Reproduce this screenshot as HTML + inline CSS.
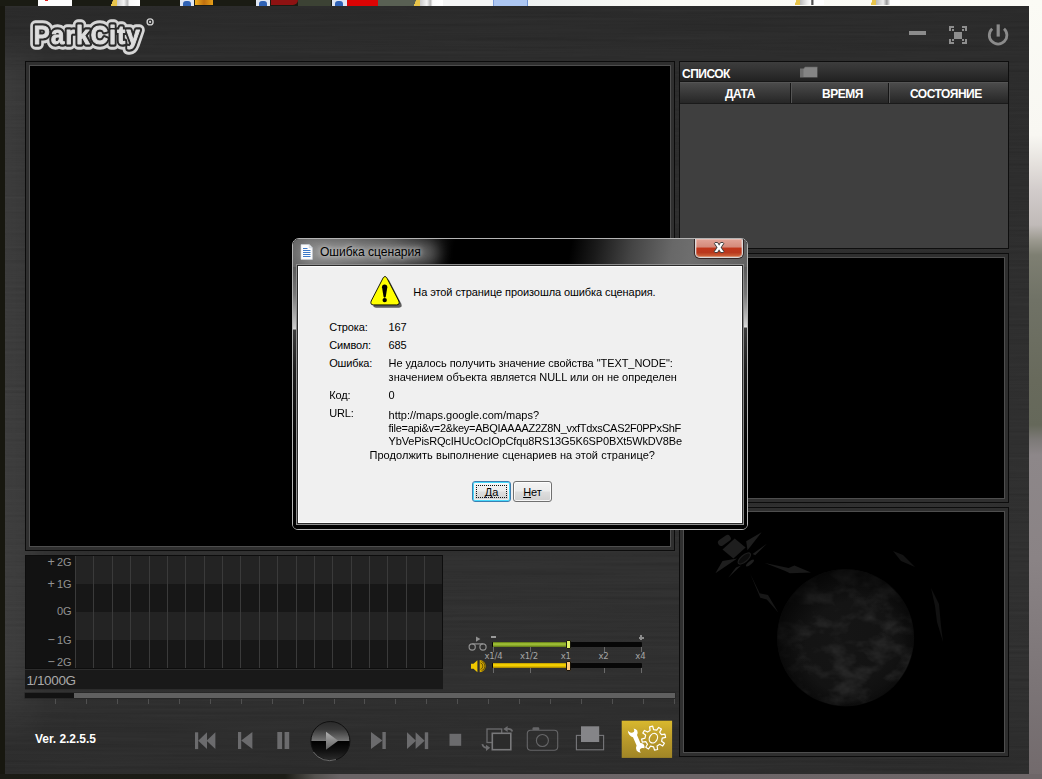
<!DOCTYPE html>
<html lang="ru">
<head>
<meta charset="utf-8">
<title>ParkCity</title>
<style>
*{box-sizing:border-box;margin:0;padding:0}
html,body{width:1042px;height:779px;overflow:hidden;background:#16160f;font-family:"Liberation Sans",sans-serif}
#desk{position:absolute;left:0;top:0;width:1042px;height:779px;overflow:hidden;background:#17170f}
.a{position:absolute}
/* desktop bits */
#dright{left:1029px;top:0;width:13px;height:779px;background:linear-gradient(#fbfbf5 0,#f8f7f2 135px,#e4e0dc 165px,#d2cccb 190px,#c0bab8 225px,#9c9a90 240px,#7e7f72 255px,#707266 300px,#686a5c 380px,#65685a 425px,#7d7a78 440px,#8d8789 455px,#8a8385 560px,#7c7577 680px,#726a6c 779px)}
#dbot{left:0;top:774px;width:1042px;height:5px;background:linear-gradient(90deg,#1b1b15 0,#1d1d17 285px,#55524f 315px,#6a6466 340px,#6e6668 100%)}
/* window */
#win{left:5px;top:6px;width:1024px;height:768px;background:
 linear-gradient(#282828 0,#2a2a2a 50px,#2c2c2c 300px,#2e2e2e 560px,#2d2d2d 680px,#2b2b2b 730px,#2a2a2a 768px)}
.frame{position:absolute;border:1px solid #0c0c0c;background:#2f2f2f}
.frame>i{position:absolute;left:3px;top:3px;right:3px;bottom:3px;border:1px solid #4e4e4e;background:#000;display:block}
.lt{color:#fff;font-weight:bold;font-size:12px;line-height:14px;white-space:nowrap;letter-spacing:-.5px}
.gl{left:20px;width:51.5px;text-align:right;font-size:11px;line-height:12px;color:#939393;letter-spacing:-.1px}
.tk{width:1px;height:4.5px;background:#6a6a6a}
.sl{top:650.5px;width:20px;text-align:center;font-family:"DejaVu Sans",sans-serif;font-size:8.5px;line-height:11px;color:#a6a6a6;letter-spacing:-.2px}
#dlg{left:292px;top:238px;width:456px;height:292px;border:1px solid #b4b4b4;border-radius:7px 7px 6px 6px;overflow:hidden;background:#000}
#cli{left:5px;top:27px;width:443.6px;height:257px;background:#f0f0f0;border:1px solid #fdfdfd;box-shadow:0 0 0 1px #2a2a2a,0 0 0 2px #8e8e8e}
.dt{font-size:11px;line-height:13px;color:#000;white-space:nowrap}
.btn{height:21px;border:1px solid #707070;border-radius:3px;background:linear-gradient(#f4f4f4 0,#ececec 48%,#dedede 52%,#d0d0d0 100%);box-shadow:inset 0 0 0 1px rgba(255,255,255,.8);font-size:11px;line-height:20px;text-align:center;color:#000}
.btn i{position:absolute;left:3px;top:3px;right:3px;bottom:3px;border:1px dotted #111;display:block}
.gl b{font-weight:normal;font-size:12.5px;margin-right:2.4px;line-height:10px}
#lm{left:5px;top:30px;width:90px;height:730px;background:linear-gradient(90deg,rgba(255,255,255,.07) 0,rgba(255,255,255,.055) 18px,rgba(255,255,255,.015) 40px,rgba(255,255,255,0) 90px);-webkit-mask-image:linear-gradient(transparent 0,#000 50px,#000 640px,transparent 720px);mask-image:linear-gradient(transparent 0,#000 50px,#000 640px,transparent 720px)}
</style>
</head>
<body>
<div id="desk">
<!-- top desktop strip -->
<div class="a" style="left:0;top:0;width:1042px;height:6px;background:#1a1b13"></div>
<div class="a" style="left:38px;top:0;width:34px;height:6px;background:#fdfdfd"></div>
<div class="a" style="left:45px;top:0;width:3px;height:1px;background:#e02020"></div>
<div class="a" style="left:109px;top:0;width:9px;height:6px;background:linear-gradient(115deg,#1a1b13 35%,#e8c44a 36%)"></div>
<div class="a" style="left:117px;top:0;width:23px;height:6px;background:linear-gradient(90deg,#c9c9c9,#f4f4f4 30%,#b8b8b8 45%,#fafafa 55%,#fff)"></div>
<div class="a" style="left:180px;top:0;width:14px;height:6px;background:#dfe6f3"></div>
<div class="a" style="left:183px;top:1px;width:8px;height:5px;background:#2f62b5;border-radius:3px 3px 0 0"></div>
<div class="a" style="left:195px;top:0;width:18px;height:5px;background:linear-gradient(90deg,#f0b020,#c07010 50%,#e8a018)"></div>
<div class="a" style="left:256px;top:0;width:14px;height:6px;background:#dfe6f3"></div>
<div class="a" style="left:259px;top:1px;width:8px;height:5px;background:#2f62b5;border-radius:3px 3px 0 0"></div>
<div class="a" style="left:271px;top:0;width:27px;height:5px;background:#8d1212;border-radius:0 0 6px 0"></div>
<div class="a" style="left:298px;top:0;width:33px;height:6px;background:#3c4234"></div>
<div class="a" style="left:332px;top:0;width:15px;height:6px;background:#dfe6f3"></div>
<div class="a" style="left:335px;top:1px;width:8px;height:5px;background:#2f62b5;border-radius:3px 3px 0 0"></div>
<div class="a" style="left:347px;top:0;width:31px;height:6px;background:#dc0404"></div>
<div class="a" style="left:378px;top:0;width:36px;height:6px;background:#596053"></div>
<div class="a" style="left:412px;top:0;width:9px;height:6px;background:linear-gradient(115deg,#596053 35%,#e8c44a 36%)"></div>
<div class="a" style="left:420px;top:0;width:23px;height:6px;background:linear-gradient(90deg,#c9c9c9,#f4f4f4 30%,#b8b8b8 45%,#fafafa 55%,#fff)"></div>
<div class="a" style="left:443px;top:0;width:50px;height:6px;background:#f4f5f5"></div>
<div class="a" style="left:493px;top:0;width:35px;height:6px;background:#adc7f2;border-right:1px solid #6f94d6;border-left:1px solid #7fa0de"></div>
<div class="a" style="left:528px;top:0;width:514px;height:6px;background:linear-gradient(90deg,#eef1f1,#fafaf5 140px,#fbfbf6)"></div>
<div class="a" style="left:793px;top:0;width:8px;height:5px;background:linear-gradient(115deg,#fbfbf6 35%,#e8c44a 36%)"></div>
<div class="a" style="left:800px;top:0;width:24px;height:5px;background:linear-gradient(90deg,#bbb,#eee 30%,#fff 45%,#222 50%,#fff 60%)"></div>
<div class="a" style="left:869px;top:0;width:8px;height:5px;background:linear-gradient(115deg,#fbfbf6 35%,#e8c44a 36%)"></div>
<div class="a" style="left:876px;top:0;width:24px;height:5px;background:linear-gradient(90deg,#bbb,#eee 30%,#999 45%,#fff 60%)"></div>
<div class="a" id="dright"></div>
<div class="a" id="dbot"></div>

<!-- application window -->
<div class="a" id="win">
<div class="a" style="left:-5px;top:-6px;width:1042px;height:779px">
<svg class="a" id="brush" style="left:5px;top:6px;opacity:.032" width="1024" height="768"><filter id="bn" x="0" y="0" width="1" height="1" color-interpolation-filters="sRGB"><feTurbulence type="fractalNoise" baseFrequency=".005 .33" numOctaves="3" seed="4"/><feColorMatrix values=".6 .6 .6 0 -.4  .6 .6 .6 0 -.4  .6 .6 .6 0 -.4  0 0 0 0 1"/></filter><rect width="1024" height="768" filter="url(#bn)"/></svg>
<div class="a" id="lm"></div>
<!-- logo -->
<svg class="a" style="left:20px;top:10px;will-change:transform" width="150" height="52" viewBox="20 10 150 52">
 <g font-family="Liberation Sans, sans-serif" font-weight="bold" font-size="26.5" stroke-linejoin="round" stroke-linecap="round" transform="scale(.9 1)">
  <text x="37.4" y="44" textLength="118" lengthAdjust="spacing" fill="#d6d6d6" stroke="#d6d6d6" stroke-width="11.4">ParkCity</text>
  <text x="37.4" y="44" textLength="118" lengthAdjust="spacing" fill="#2b2b2b" stroke="#2b2b2b" stroke-width="5.4">ParkCity</text>
  <text x="37.4" y="44" textLength="118" lengthAdjust="spacing" fill="#dedede" stroke="#dedede" stroke-width="1">ParkCity</text>
 </g>
 <circle cx="150.1" cy="21.9" r="3" fill="none" stroke="#cfcfcf" stroke-width="1.4"/>
 <circle cx="150.1" cy="21.9" r="1.1" fill="#cfcfcf"/>
</svg>
<!-- window buttons -->
<div class="a" style="left:909px;top:31px;width:17px;height:4px;background:#8b8b8b"></div>
<svg class="a" style="left:948px;top:25px" width="20" height="20" viewBox="948 25 20 20" fill="#8e8e8e" shape-rendering="crispEdges">
 <rect x="954" y="32" width="8" height="7"/>
 <path d="M949 26h5v2h-3v3h-2zM952 29h2v2h-2zM962 26h5v5h-2v-3h-3zM962 29h2v2h-2zM949 39h2v3h3v2h-5zM952 39h2v2h-2zM965 39h2v5h-5v-2h3zM962 39h2v2h-2z"/>
</svg>
<svg class="a" style="left:985px;top:22px" width="26" height="26" viewBox="985 22 26 26" fill="none" stroke="#8b8b8b" stroke-width="2.8" stroke-linecap="butt">
 <path d="M992.2 28.7A8.8 8.8 0 1 0 1004 28.7"/>
 <path d="M998.2 24.4V36.6" stroke-width="3.2"/>
</svg>
<!-- video panel -->
<div class="frame" style="left:25px;top:61px;width:650px;height:490px"><i></i></div>
<!-- list panel -->
<div class="a" style="left:679px;top:61px;width:330px;height:188px;background:#3f3f3f;border:1px solid #0e0e0e"></div>
<div class="a" style="left:680px;top:62px;width:328px;height:20px;background:linear-gradient(#3d3d3d,#333 40%,#222);border-bottom:1px solid #161616"></div>
<div class="a lt" style="left:682px;top:67px;">СПИСОК</div>
<svg class="a" style="left:799px;top:65px" width="21" height="14" viewBox="799 65 21 14"><path d="M800 68.5h3.5l1.5-1.8h12.5v10.8H800z" fill="#6e6e6e"/><path d="M803.5 69.5l1.8-2h11.7v9.6h-13.5z" fill="#858585"/></svg>
<div class="a" style="left:680px;top:82px;width:328px;height:22px;background:linear-gradient(#4b4b4b,#3a3a3a 45%,#262626);border-top:1px solid #555;border-bottom:1px solid #1a1a1a"></div>
<div class="a" style="left:790px;top:83px;width:2px;height:20px;background:linear-gradient(90deg,#151515 50%,#555 50%)"></div>
<div class="a" style="left:888px;top:83px;width:2px;height:20px;background:linear-gradient(90deg,#151515 50%,#555 50%)"></div>
<div class="a lt" style="left:725px;top:87px;">ДАТА</div>
<div class="a lt" style="left:822px;top:87px;">ВРЕМЯ</div>
<div class="a lt" style="left:910px;top:87px;">СОСТОЯНИЕ</div>
<!-- map panel -->
<div class="frame" style="left:679px;top:253px;width:330px;height:250px"><i></i></div>
<!-- earth panel -->
<div class="frame" style="left:679px;top:507px;width:330px;height:250px"><i></i></div>
<!-- earth + satellite -->
<svg class="a" style="left:684px;top:512px" width="320" height="240" viewBox="684 512 320 240">
 <defs>
  <radialGradient id="eg" cx=".45" cy=".45" r=".6"><stop offset="0" stop-color="#151515"/><stop offset=".7" stop-color="#131313"/><stop offset=".93" stop-color="#0f0f0f"/><stop offset="1" stop-color="#080808"/></radialGradient>
  <radialGradient id="es" cx=".55" cy=".58" r=".62"><stop offset=".55" stop-color="#000" stop-opacity="0"/><stop offset="1" stop-color="#000" stop-opacity=".75"/></radialGradient>
  <clipPath id="ec"><circle cx="845.6" cy="637.8" r="68"/></clipPath>
  <filter id="cl" x="0" y="0" width="1" height="1" color-interpolation-filters="sRGB"><feTurbulence type="fractalNoise" baseFrequency=".03 .045" numOctaves="4" seed="7"/><feColorMatrix values="0 0 0 0 .18  0 0 0 0 .18  0 0 0 0 .18  2.8 0 0 0 -1.25"/></filter>
 </defs>
 <circle cx="845.6" cy="637.8" r="68.5" fill="url(#eg)"/>
 <g clip-path="url(#ec)"><rect x="776" y="568" width="140" height="140" filter="url(#cl)"/></g>
 <circle cx="845.6" cy="637.8" r="68.5" fill="url(#es)"/>
 <g fill="#1e1e1e">
  <path d="M734.7 538.6L745.6 547.6L733.4 558.5L722.5 549.5Z"/>
  <rect x="717.4" y="537.2" width="14" height="6.5" rx="3" transform="rotate(-35 724.4 540.5)"/>
  <path d="M746.2 541.2L761.6 532.2L747.5 550.2Z"/>
  <path d="M752.6 554L766.8 543.7L755.2 555.3Z"/>
  <path d="M737.2 558.5L715.4 573.3L722.5 561Z"/>
  <path d="M741 565.6L728.2 577.8L736 567.5Z"/>
  <ellipse cx="744.3" cy="558.5" rx="7.7" ry="3.2" transform="rotate(-40 744.3 558.5)" fill="#0c0c0c" stroke="#1e1e1e" stroke-width="1.2"/>
  <ellipse cx="750" cy="563" rx="5" ry="1.6" transform="rotate(-40 750 563)"/>
  <path d="M764.8 563L788.6 568.1L794.4 565.6L811 572.6L789.9 573.3L784.7 570.7Z" fill="#191919"/>
  <path d="M750 573.3L759.7 593.2L768 595.1L778.3 612.4L766.8 599.6L760.3 597.7Z" fill="#171717"/>
  <path d="M893 551l10 4 12 12-14-6z" fill="#131313"/>
  <path d="M931 588l8 16 2 22 2 16-6-20-2-16z" fill="#111"/>
 </g>
</svg>

<!-- g-sensor graph -->
<div class="a" style="left:25px;top:555px;width:417.5px;height:134.5px;background:#2c2c2c"></div>
<div class="a" style="left:25px;top:555px;width:417.5px;height:114px;background:#0d0d0d"></div>
<div class="a" style="left:26px;top:556px;width:49px;height:112px;background:#121212"></div>
<div class="a" style="left:75px;top:556px;width:367px;height:112px;background:linear-gradient(#232323 0,#232323 28px,#171717 28px,#171717 56px,#232323 56px,#232323 84px,#171717 84px,#171717 112px)"></div>
<svg class="a" style="left:75px;top:556px" width="368" height="112" viewBox="75 556 368 112" fill="#3a3a3a" shape-rendering="crispEdges"><rect x="75" y="556" width="1" height="112"/><rect x="93" y="556" width="1" height="112"/><rect x="112" y="556" width="1" height="112"/><rect x="130" y="556" width="1" height="112"/><rect x="149" y="556" width="1" height="112"/><rect x="167" y="556" width="1" height="112"/><rect x="185" y="556" width="1" height="112"/><rect x="204" y="556" width="1" height="112"/><rect x="222" y="556" width="1" height="112"/><rect x="240" y="556" width="1" height="112"/><rect x="259" y="556" width="1" height="112"/><rect x="277" y="556" width="1" height="112"/><rect x="296" y="556" width="1" height="112"/><rect x="314" y="556" width="1" height="112"/><rect x="332" y="556" width="1" height="112"/><rect x="351" y="556" width="1" height="112"/><rect x="369" y="556" width="1" height="112"/><rect x="387" y="556" width="1" height="112"/><rect x="406" y="556" width="1" height="112"/><rect x="424" y="556" width="1" height="112"/></svg>
<div class="a gl" style="top:556px"><b>+</b>2G</div>
<div class="a gl" style="top:578px"><b>+</b>1G</div>
<div class="a gl" style="top:605px">0G</div>
<div class="a gl" style="top:634px"><b>−</b>1G</div>
<div class="a gl" style="top:656px"><b>−</b>2G</div>
<div class="a" style="left:25px;top:670px;width:417.5px;height:19px;background:#191919"></div>
<div class="a" style="left:26.4px;top:673px;font-size:13.5px;line-height:15px;color:#a9a9a9;letter-spacing:-.35px">1/1000G</div>
<!-- timeline -->
<div class="a" style="left:25px;top:692.8px;width:650px;height:5px;background:#606060;box-shadow:0 0 0 .5px #222"></div>
<div class="a" style="left:25px;top:692.8px;width:49px;height:5px;background:#121212"></div>
<div class="a" style="left:25px;top:699px;width:651px;height:5px;background:repeating-linear-gradient(90deg,transparent 0,transparent 29.95px,#505050 29.95px,#505050 30.952px)"></div>

<!-- speed slider -->
<svg class="a" style="left:466px;top:633px" width="24" height="20" viewBox="466 633 24 20" fill="none" stroke="#909090" stroke-width="1.2">
 <circle cx="472.2" cy="647" r="3.1"/><circle cx="483" cy="647" r="3.1"/><path d="M472.2 643.9H483"/>
 <path d="M476 636.4l4.4 2.7-4.4 2.7z" fill="#909090" stroke="none"/>
</svg>
<div class="a" style="left:491px;top:636.2px;width:5px;height:1.9px;background:#9a9a9a"></div>
<div class="a" style="left:638.5px;top:637px;width:5px;height:1.6px;background:#8c8c8c"></div>
<div class="a" style="left:640.2px;top:635.3px;width:1.6px;height:5px;background:#8c8c8c"></div>
<div class="a" style="left:492px;top:641.5px;width:149.6px;height:5.5px;background:#070707;border-radius:1px"></div>
<div class="a" style="left:492.5px;top:641.6px;width:74.5px;height:5.4px;background:linear-gradient(#5c7414,#97b830 30%,#9cbc34 50%,#7d9a24 80%,#5a7014)"></div>
<div class="a" style="left:566px;top:640.3px;width:5px;height:9.2px;background:#dff266;border:1px solid #1c1c10;border-radius:1px"></div>
<div class="a tk" style="left:493.2px;top:647px"></div><div class="a tk" style="left:530.2px;top:647px"></div><div class="a tk" style="left:604.2px;top:647px"></div><div class="a tk" style="left:641.2px;top:647px"></div>
<div class="a sl" style="left:483.5px">x1/4</div><div class="a sl" style="left:519px">x1/2</div><div class="a sl" style="left:555.7px">x1</div><div class="a sl" style="left:593.5px">x2</div><div class="a sl" style="left:630.4px">x4</div>
<!-- volume slider -->
<svg class="a" style="left:468px;top:658px" width="22" height="16" viewBox="468 658 22 16">
 <path d="M471 663.7h2.5l3.9-3.5v12l-3.9-3.5H471z" fill="#f0c800"/>
 <path d="M479.7 660A6.1 6.1 0 0 1 479.7 672.2z" fill="#d2a800"/>
 <g fill="none" stroke="#3c3008" stroke-width=".7"><path d="M480.5 662.8A3.5 3.5 0 0 1 480.5 669.4"/><path d="M481.5 661.5A4.8 4.8 0 0 1 481.5 670.7"/><path d="M482.6 660.8A5.6 5.6 0 0 1 482.6 671.4" opacity=".6"/></g>
</svg>
<div class="a" style="left:492px;top:663px;width:149.6px;height:5px;background:#070707;border-radius:1px"></div>
<div class="a" style="left:492.5px;top:663px;width:74.5px;height:5px;background:linear-gradient(#b89400,#f0cc00 30%,#f4d000 50%,#cfa800 80%,#947600)"></div>
<div class="a" style="left:566px;top:661.3px;width:5px;height:9.6px;background:#ffc97a;border:1px solid #1c1408;border-radius:1px"></div>
<div class="a tk" style="left:493.2px;top:668px"></div><div class="a tk" style="left:530.2px;top:668px"></div><div class="a tk" style="left:604.2px;top:668px"></div><div class="a tk" style="left:641.2px;top:668px"></div>

<div class="a" style="left:35px;top:732px;font-size:12px;line-height:14px;font-weight:bold;color:#fff;letter-spacing:-.05px">Ver. 2.2.5.5</div>
<svg class="a" style="left:190px;top:716px" width="490" height="50" viewBox="190 716 490 50">
 <defs>
  <linearGradient id="pg" x1="0" y1="0" x2="0" y2="1"><stop offset="0" stop-color="#2a2a2a"/><stop offset=".2" stop-color="#383838"/><stop offset=".495" stop-color="#767676"/><stop offset=".505" stop-color="#000"/><stop offset=".75" stop-color="#111"/><stop offset="1" stop-color="#2c2c2c"/></linearGradient>
  <linearGradient id="gold" x1="0" y1="0" x2="0" y2="1"><stop offset="0" stop-color="#d9b92e"/><stop offset=".45" stop-color="#bd9d2b"/><stop offset="1" stop-color="#a08526"/></linearGradient>
 </defs>
 <g fill="#6b6b6d">
  <!-- skip start -->
  <rect x="195" y="732.3" width="3.2" height="16.8"/><path d="M207 732.3v16.8l-8.8-8.4z"/><path d="M215.4 732.3v16.8l-8.8-8.4z"/>
  <!-- step back -->
  <rect x="238" y="732" width="3.2" height="17"/><path d="M252.4 732v17l-11.2-8.5z"/>
  <!-- pause -->
  <rect x="277.3" y="732" width="4.8" height="17"/><rect x="284.6" y="732" width="4.6" height="17"/>
  <!-- step fwd -->
  <path d="M371 732v17l11.4-8.5z"/><rect x="382.4" y="732" width="3.4" height="17"/>
  <!-- skip end -->
  <path d="M407 732.3v16.8l9-8.4z"/><path d="M415.6 732.3v16.8l9-8.4z"/><rect x="424.8" y="732.3" width="3.4" height="16.8"/>
  <!-- stop -->
  <rect x="449.5" y="733.8" width="11.7" height="12"/>
 </g>
 <!-- play -->
 <circle cx="330.4" cy="741" r="19.5" fill="url(#pg)" stroke="#101010" stroke-width="1"/>
 <path d="M313.5 752A19.5 19.5 0 0 0 336 759.6" fill="none" stroke="#9a9a9a" stroke-width=".8" opacity=".8"/>
 <linearGradient id="tg" x1="0" y1="0" x2="0" y2="1"><stop offset="0" stop-color="#b0b0b0"/><stop offset="1" stop-color="#606060"/></linearGradient>
 <path d="M326 731.8v18l12.2-9z" fill="url(#tg)"/>
 <!-- rotate -->
 <g fill="none" stroke="#6c6c6e">
  <rect x="487" y="729" width="14.7" height="13.5" stroke-width="1.3"/>
  <rect x="492.3" y="733.3" width="18.5" height="16.4" stroke-width="1.6" stroke="#78787a" fill="#2b2b2b"/>
  <path d="M512.3 731.4Q511.5 728.6 507 729" stroke-width="1.7"/><path d="M507.6 726l-4.3 3 4.3 3z" fill="#6c6c6e" stroke="none"/>
  <path d="M482.3 744.2Q483 747.6 486.5 747.9" stroke-width="1.7"/><path d="M486 744.8l4.2 3-4.2 3.2z" fill="#6c6c6e" stroke="none"/>
 </g>
 <!-- camera -->
 <g fill="none" stroke="#666668" stroke-width="1.1">
  <rect x="527.3" y="730.2" width="30.4" height="20" rx="3.5"/>
  <circle cx="542.4" cy="740.5" r="6"/>
  <path d="M532.5 730v-1.6q0-1.2 1.2-1.2h4.4q1.2 0 1.2 1.2v1.6z" fill="#666668" stroke="none"/>
 </g>
 <!-- layers -->
 <rect x="576.4" y="735.4" width="27.2" height="14.4" fill="none" stroke="#77777a" stroke-width="1.1"/>
 <rect x="581" y="726.3" width="18.2" height="15.7" fill="#858588"/>
 <!-- settings -->
 <rect x="621.7" y="720.7" width="50.4" height="37.2" fill="url(#gold)"/>
 <path d="M627.8 730.2Q628 733.5 629.5 735Q631 736.8 633 737.2L636.6 745.5Q635.2 748.5 636.6 750.5Q637.8 752.6 640.8 752.8Q639.2 750.6 640 749.2Q641.5 747.6 644.4 748.2Q645 745.6 643.6 744.2Q642 742.8 640.4 743L637 735Q638.2 732.8 637.2 730.6Q636.2 728.6 633.6 728.4Q634.8 730.4 634 731.8Q632.2 733.4 630.4 732.6Q628.8 731.8 627.8 730.2Z" fill="#fff"/>
 <g fill="none" stroke="#fff" stroke-width="1.2" stroke-linejoin="round">
  <path d="M661.4 734.7L664.9 734.2L665.6 737.3L662.2 738.2L661.6 741.3L664.4 743.3L662.7 746L659.7 744.3L657.1 746L657.6 749.5L654.5 750.2L653.6 746.8L650.5 746.2L648.5 749L645.8 747.3L647.5 744.3L645.8 741.7L642.3 742.2L641.6 739.1L645 738.2L645.6 735.1L642.8 733.1L644.5 730.4L647.5 732.1L650.1 730.4L649.6 726.9L652.7 726.2L653.6 729.6L656.7 730.2L658.7 727.4L661.4 729.1L659.7 732.1z"/>
  <ellipse cx="653.4" cy="738.2" rx="3.9" ry="5" transform="rotate(28 653.4 738.2)"/>
 </g>
</svg>

</div>

</div>
<!-- script error dialog -->
<div class="a" id="dlg">
 <div class="a" style="left:0;top:0;width:454px;height:290px;background:
  linear-gradient(100deg,#666 0,#5e5e5e 45px,#444 95px,#1c1c1c 130px,#000 160px,#000 275px,#1a1a1a 300px,#444 335px,#686868 375px,#6e6e6e 395px,#606060 454px) 0 0/454px 28px no-repeat,
  linear-gradient(#5e5e5e 0,#585858 28px,#777 55px,#c8c8c8 88px,#d8d8d8 90px,#3a3a3a 91px,#1c1c1c 130px,#060606 200px,#000 290px) 0 0/6px 290px no-repeat,
  linear-gradient(#5e5e5e 0,#585858 28px,#777 55px,#d0d0d0 86px,#e2e2e2 88px,#3a3a3a 89px,#1c1c1c 130px,#060606 200px,#000 290px) 448px 0/6px 290px no-repeat,
  #000"></div>
 <div class="a" style="left:6px;top:2px;width:140px;height:24px;border-radius:12px;background:rgba(255,255,255,.3);filter:blur(7px)"></div>
 <svg class="a" style="left:7px;top:5px" width="14" height="16" viewBox="0 0 14 16"><path d="M1 .6h8.2l3.2 3.2v11.6H1z" fill="#fdfdfd" stroke="#c9d0da" stroke-width=".6"/><path d="M9.2.6v3.2h3.2" fill="#e3e8ef" stroke="#b8c0cc" stroke-width=".5"/><path d="M3 4.5h4.5M3 6.5h7.5M3 8.5h7.5M3 10.5h7.5M3 12.5h7.5" stroke="#3b78c9" stroke-width="1"/></svg>
 <div class="a" style="left:27px;top:6px;font-size:12.1px;line-height:15px;color:#000;white-space:nowrap;letter-spacing:-.05px;text-shadow:0 0 5px rgba(255,255,255,.75),0 0 9px rgba(255,255,255,.6)">Ошибка сценария</div>
 <!-- close -->
 <div class="a" style="left:402px;top:0;width:48px;height:19px;border:1px solid #d9d9d9;border-top:none;border-radius:0 0 5px 5px;background:linear-gradient(#e2a497 0,#d4897a 45%,#c1361b 50%,#b9381d 75%,#cf6a3e 100%);box-shadow:inset 0 0 0 1px rgba(255,255,255,.25),0 0 0 1px rgba(40,20,20,.8)"></div>
 <div class="a" style="left:402px;top:-1px;width:48px;height:19px;text-align:center;font-weight:bold;font-size:15px;line-height:19px;color:#fff;text-shadow:0 0 1px #333,1px 0 0 #444,-1px 0 0 #444,0 1px 0 #444,0 -1px 0 #444;font-family:'DejaVu Sans','Liberation Sans',sans-serif">x</div>
 <!-- client -->
 <div class="a" id="cli">
  <svg class="a" style="left:69px;top:7px" width="36" height="36" viewBox="368 274 36 36">
   <path id="tri" d="M371.2 301L383.3 277.6Q385 275.2 386.7 277.6L398.8 301Q400.2 304.8 396.5 304.9L373.5 304.9Q369.8 304.8 371.2 301Z" fill="#5c5c5c" transform="translate(2.5 2.8)"/>
   <path d="M371.2 301L383.3 277.6Q385 275.2 386.7 277.6L398.8 301Q400.2 304.8 396.5 304.9L373.5 304.9Q369.8 304.8 371.2 301Z" fill="#ffff00" stroke="#000" stroke-width=".9"/>
   <path d="M382 287.2Q382 284.6 384.6 284.6Q387.3 284.6 387.3 287.2L385.8 296.6Q385.6 297.7 384.65 297.7Q383.7 297.7 383.5 296.6Z" fill="#000"/><circle cx="384.7" cy="300.1" r="2.2" fill="#000"/>
  </svg>
  <div class="a dt" style="left:114.3px;top:19px;letter-spacing:-.08px">На этой странице произошла ошибка сценария.</div>
  <div class="a dt" style="left:30.2px;top:54px;letter-spacing:-.15px">Строка:</div><div class="a dt" style="left:89.6px;top:54px;letter-spacing:-.2px">167</div>
  <div class="a dt" style="left:30.2px;top:72px;letter-spacing:-.15px">Символ:</div><div class="a dt" style="left:89.6px;top:72px;letter-spacing:-.2px">685</div>
  <div class="a dt" style="left:30.2px;top:90px;letter-spacing:-.15px">Ошибка:</div><div class="a dt" style="left:89.6px;top:89px;line-height:14px;letter-spacing:-.06px">Не удалось получить значение свойства "TEXT_NODE":<br><span style="letter-spacing:-.012px">значением объекта является NULL или он не определен</span></div>
  <div class="a dt" style="left:30.2px;top:122px;letter-spacing:-.15px">Код:</div><div class="a dt" style="left:89.6px;top:122px">0</div>
  <div class="a dt" style="left:30.2px;top:140px;letter-spacing:-.15px">URL:</div><div class="a dt" style="left:89.6px;top:142px;line-height:13px">http://maps.google.com/maps?<br><span style="letter-spacing:-.285px">file=api&amp;v=2&amp;key=ABQIAAAAZ2Z8N_vxfTdxsCAS2F0PPxShF</span><br><span style="letter-spacing:-.15px">YbVePisRQcIHUcOcIOpCfqu8RS13G5K6SP0BXt5WkDV8Be</span></div>
  <div class="a dt" style="left:70.5px;top:182px;letter-spacing:.05px">Продолжить выполнение сценариев на этой странице?</div>
  <div class="a btn" style="left:173px;top:214px;width:39px;border-color:#3c7fb1;box-shadow:inset 0 0 0 1px #48d8fb,inset 0 0 0 2px rgba(255,255,255,.6)"><span><u>Д</u>а</span><i></i></div>
  <div class="a btn" style="left:214px;top:214px;width:39px"><span><u>Н</u>ет</span></div>
 </div>
</div>

</div>
</body>
</html>
